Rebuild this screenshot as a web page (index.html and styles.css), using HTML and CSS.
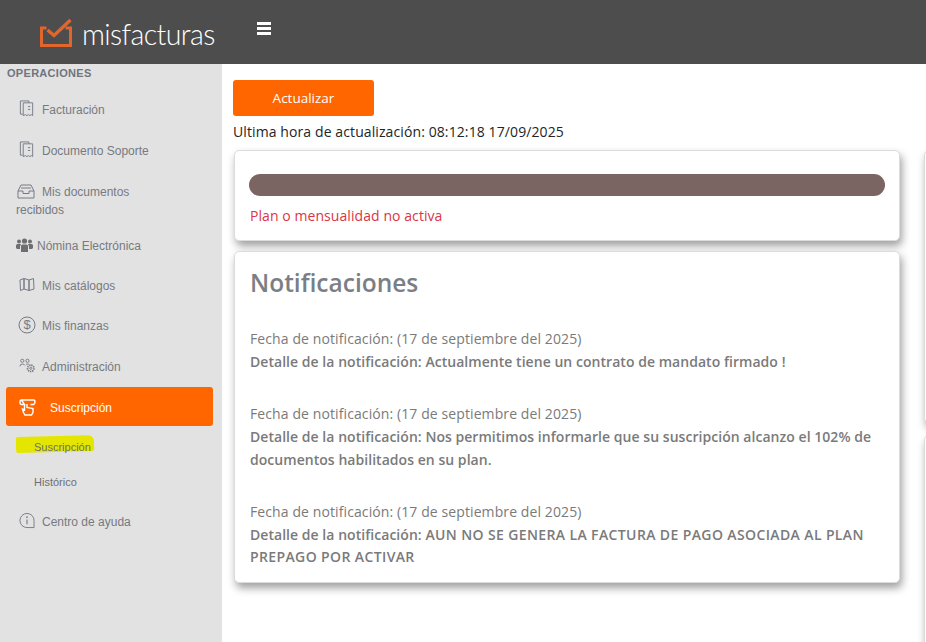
FILE: index.html
```html
<!DOCTYPE html>
<html lang="es">
<head>
<meta charset="utf-8">
<title>misfacturas</title>
<link rel="stylesheet" href="styles.css">
</head>
<body>
<header class="topbar">
  <div class="brand">
    <svg class="brand-mark" viewBox="0 0 33 30" width="33" height="30" aria-hidden="true">
      <path d="M6.500 10H1.500V27.500H30.500V10H25.500" fill="none" stroke="#e2662c" stroke-width="3"/>
      <path d="M7.500 12L14 17.500L30.500 2" fill="none" stroke="#e2662c" stroke-width="3.400"/>
    </svg>
    <span class="brand-name">misfacturas</span>
  </div>
  <div class="burger" aria-label="menu"><i></i><i></i><i></i></div>
</header>
<div class="shell">
  <nav class="sidebar">
    <div class="section">OPERACIONES</div>
    <a class="item item-fact"><svg class="ic" viewBox="0 0 16 18"><path d="M3.500 15H1V1H10V3M4 3H14V16.500L12.500 15.500L11 16.500L9.500 15.500L8 16.500L6.500 15.500L4 16.500ZM9 7H11.500M9 10H11.500" fill="none" stroke="currentColor"/></svg><span>Facturación</span></a>
    <a class="item item-doc"><svg class="ic" viewBox="0 0 16 18"><path d="M3.500 15H1V1H10V3M4 3H14V16.500L12.500 15.500L11 16.500L9.500 15.500L8 16.500L6.500 15.500L4 16.500ZM9 7H11.500M9 10H11.500" fill="none" stroke="currentColor"/></svg><span>Documento Soporte</span></a>
    <a class="item item-rec"><svg class="ic ic-tray" viewBox="0 0 18 15"><path d="M1 7V14H17V7L14 1H4ZM1 7H6V9.500H12V7H17M4 4H14" fill="none" stroke="currentColor"/></svg>Mis documentos recibidos</a>
    <a class="item item-nom"><svg class="ic ic-people" viewBox="0 0 17 15"><g fill="currentColor"><circle cx="3" cy="3.500" r="2"/><circle cx="14" cy="3.500" r="2"/><circle cx="8.500" cy="3" r="2.600"/><path d="M0 10V7.500Q0 6 1.500 6H5L4 8.500V11H1ZM17 10V7.500Q17 6 15.500 6H12L13 8.500V11H16ZM5 14V8Q5 6.500 6.500 6.500H10.500Q12 6.500 12 8V14Z"/></g></svg><span>Nómina Electrónica</span></a>
    <a class="item item-cat"><svg class="ic" viewBox="0 0 16 15"><path d="M1 3L5 1.500V12L1.500 13.500ZM5 1.500L10 3V13.500L5 12ZM10 3L14.500 1.500L15 12L10 13.500Z" fill="none" stroke="currentColor"/></svg><span>Mis catálogos</span></a>
    <a class="item item-fin"><svg class="ic" viewBox="0 0 18 18"><circle cx="9" cy="9" r="8" fill="none" stroke="currentColor"/><text x="9" y="13" text-anchor="middle" class="dollar">$</text></svg><span>Mis finanzas</span></a>
    <a class="item item-adm"><svg class="ic" viewBox="0 0 17 15"><g fill="none" stroke="currentColor"><circle cx="3.500" cy="2.500" r="1.700"/><circle cx="9" cy="2.500" r="1.700"/><path d="M1 8.500Q1 6 3.500 6Q6 6 6.500 7.500M7.500 6H10.500"/><circle cx="12.500" cy="10.500" r="3.400" stroke-width="1.800" stroke-dasharray="1.500 .8"/><circle cx="12.500" cy="10.500" r="1.100"/></g></svg><span>Administración</span></a>
    <a class="item-active"><svg class="ic-active" viewBox="0 0 17 17"><path d="M2.500 1H14.500Q16 1 16 3T14.500 5.500H11.500M5.500 5.500H2.500Q1 5.500 1 3.200T2.500 1ZM5.500 5V11L3.500 10L4.500 13.500L6 16H12.500L14 13.500V9.500L8 8.500V5" fill="none" stroke="currentColor" stroke-width="1.400"/></svg><span>Suscripción</span></a>
    <a class="sub sub-mark"><span class="marker"></span><span class="sub-text">Suscripción</span></a>
    <a class="sub sub-hist"><span class="sub-text">Histórico</span></a>
    <a class="item item-help"><svg class="ic" viewBox="0 0 17 17"><path d="M8.500 1A7.500 7.500 0 1 0 8.500 16H16V8.500A7.500 7.500 0 0 0 8.500 1Z" fill="none" stroke="currentColor"/><path d="M8.500 7.500V12.500" stroke="currentColor" stroke-width="1.200"/><circle cx="8.500" cy="5" r=".9" fill="currentColor"/></svg><span>Centro de ayuda</span></a>
  </nav>
  <main class="main">
    <button class="refresh">Actualizar</button>
    <p class="updated">Ultima hora de actualización: 08:12:18 17/09/2025</p>
    <div class="columns">
      <div class="col-left">
        <section class="card card-plan">
          <div class="bar"></div>
          <p class="alert">Plan o mensualidad no activa</p>
        </section>
        <section class="card card-notes">
          <h2>Notificaciones</h2>
          <article class="note">
            <p>Fecha de notificación: (17 de septiembre del 2025)</p>
            <p class="detail">Detalle de la notificación: Actualmente tiene un contrato de mandato firmado !</p>
          </article>
          <article class="note">
            <p>Fecha de notificación: (17 de septiembre del 2025)</p>
            <p class="detail">Detalle de la notificación: Nos permitimos informarle que su suscripción alcanzo el 102% de documentos habilitados en su plan.</p>
          </article>
          <article class="note">
            <p>Fecha de notificación: (17 de septiembre del 2025)</p>
            <p class="detail">Detalle de la notificación: <span class="caps">AUN NO SE GENERA LA FACTURA DE PAGO ASOCIADA AL PLAN</span> <span class="caps">PREPAGO POR ACTIVAR</span></p>
          </article>
        </section>
      </div>
      <div class="col-right">
        <section class="card card-r1"></section>
        <section class="card card-r2"></section>
      </div>
    </div>
  </main>
</div>
</body>
</html>
```
FILE: styles.css
```css
* { box-sizing: border-box; }
html, body { margin: 0; height: 100%; overflow: hidden; }
body { font-family: "Open Sans", "Noto Sans", sans-serif; background: #fff; }
p, h2 { margin: 0; }

.topbar { height: 64px; background: #4d4d4d; display: flex; align-items: center; }
.brand { width: 257px; padding-left: 40px; display: flex; align-items: center; gap: 9px; flex: none; margin-top: 3px; }
.brand-mark { flex: none; margin-top: -1px; }
.brand-name { font-family: Lato, sans-serif; font-weight: 300; font-size: 28.500px; color: #fff; letter-spacing: -.6px; line-height: 30px; }
.burger { display: flex; flex-direction: column; gap: 2px; width: 14px; margin-top: -7px; }
.burger i { display: block; height: 3px; background: #fff; }

.shell { display: flex; height: 578px; }
.sidebar { width: 222px; flex: none; background: #e2e2e2; padding: 3px 9px 0 6px; font-family: "Liberation Sans", Arial, sans-serif; font-size: 12px; color: #73767f; }
.section { font-weight: 700; font-size: 11px; color: #70747f; line-height: 13px; height: 13px; letter-spacing: .3px; padding-left: 1px; }
.item { display: block; color: #777a80; line-height: 18px; padding-left: 10px; }
.item .ic, .item-rec .ic { vertical-align: -3px; }
.ic { width: 16px; height: 17px; margin: 0 7px 0 3px; color: #777a85; }
.item-fact { margin-top: 20px; }
.item-doc { margin-top: 22px; }
.item-rec { margin-top: 23px; width: 150px; }
.ic-tray { width: 18px; height: 15px; margin: 0 7px 0 1px; }
.item-nom { margin-top: 18px; }
.ic-people { width: 17px; height: 15px; margin: 0 4px 0 0; color: #6e6e70; }
.item-cat { margin-top: 21px; }
.item-fin { margin-top: 21px; }
.item-fin .ic { width: 18px; height: 18px; margin: 0 6px 0 2px; vertical-align: -4px; }
.dollar { font-size: 13px; fill: currentColor; font-family: "Liberation Sans", sans-serif; }
.item-adm { margin-top: 22px; }
.item-active { display: flex; align-items: center; height: 39px; margin-top: 11px; padding-top: 2px; background: #ff6600; color: #fff; border-radius: 3px; padding-left: 13px; }
.ic-active { width: 17px; height: 17px; margin-right: 14px; color: #fff; }
.sub { display: block; position: relative; font-size: 11px; color: #6f6f73; line-height: 14px; padding-left: 28px; }
.sub-mark { margin-top: 14px; }
.sub-hist { margin-top: 21px; }
.sub-text { position: relative; }
.marker { position: absolute; left: 10px; top: -4px; width: 78px; height: 16px; background: #e4e600; transform: rotate(-1.500deg); border-radius: 2px 6px 2px 2px; }
.item-help { margin-top: 23px; }

.main { flex: 1; min-width: 0; overflow: hidden; padding: 16px 0 0 11px; color: #212529; }
.refresh { display: block; width: 141px; height: 36px; border: 0; border-radius: 3px; background: #ff6600; color: #fff; font: 400 13.500px "Open Sans", sans-serif; padding: 0; }
.updated { font-size: 14px; line-height: 20px; margin-top: 6px; color: #212529; letter-spacing: .1px; }
.columns { display: flex; gap: 24px; margin: 8px 0 0 1px; }
.col-left { width: 666px; flex: none; display: flex; flex-direction: column; gap: 10px; }
.col-right { flex: none; width: 300px; display: flex; flex-direction: column; gap: 12px; }
.card { background: #fff; border: 1px solid #dcdcdc; border-radius: 5px; box-shadow: 2px 5px 9px rgba(0,0,0,.38); }
.card-plan { height: 91px; padding: 23px 15px 0; }
.bar { height: 22px; background: #7a6563; border-radius: 11px; margin: 0 -1px; }
.alert { color: #dc3545; font-size: 14px; line-height: 20px; margin-top: 10px; letter-spacing: .07px; }
.card-notes { height: 332px; padding: 14px 15px 0; color: #7a7a7a; font-size: 14px; line-height: 22.750px; letter-spacing: .1px; }
.card-notes h2 { font-size: 24.500px; font-weight: 600; line-height: 34px; color: #7b7e85; margin-bottom: 28px; letter-spacing: 0; }
.note { margin-bottom: 29.600px; }
.detail { font-weight: 600; letter-spacing: .04px; }
.caps { letter-spacing: .38px; }
.card-r1 { height: 273px; }
.card-r2 { height: 300px; }
```
